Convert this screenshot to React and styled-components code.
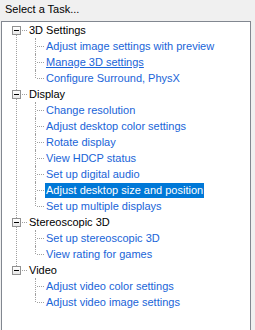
import styled, { createGlobalStyle } from "styled-components";

const GlobalStyle = createGlobalStyle`
  body {
    margin: 0;
    background: #f0f0f0;
    font-family: "Liberation Sans", Arial, sans-serif;
    font-size: 11px;
  }
`;

const Container = styled.div`
  width: 255px;
  height: 330px;
  overflow: hidden;
`;

const Heading = styled.div`
  height: 21px;
  padding-left: 5px;
  line-height: 18px;
  font-size: 11px;
  color: #000;
`;

const Panel = styled.div`
  margin-left: 1px;
  width: 248px;
  height: 320px;
  border: 1px solid #828790;
  background: #fff;
`;

const Tree = styled.ul`
  list-style: none;
  margin: 0;
  padding: 0;
`;

const Category = styled.li`
  position: relative;

  &::before {
    content: "";
    position: absolute;
    left: 14px;
    top: 8px;
    height: 100%;
    border-left: 1px dotted #a0a0a0;
  }

  &:last-child::before {
    display: none;
  }
`;

const Row = styled.div`
  position: relative;
  height: 16px;
  display: flex;
  align-items: center;
`;

const Toggle = styled.span`
  position: relative;
  z-index: 1;
  box-sizing: border-box;
  width: 9px;
  height: 9px;
  margin-left: 10px;
  border: 1px solid #919191;
  background: linear-gradient(#fff, #e8e8e8);
  display: flex;
  align-items: center;
  justify-content: center;

  &::after {
    content: "";
    width: 5px;
    height: 1px;
    background: #000;
  }
`;

const Connector = styled.span`
  width: ${(p) => p.$w}px;
  margin-left: 1px;
  border-top: 1px dotted #a0a0a0;
`;

const Label = styled.span`
  height: 15px;
  line-height: 15px;
  padding: 0 1px;
  margin-left: 1px;
  white-space: nowrap;
  color: ${(p) => (p.$selected ? "#fff" : p.$link ? "#1964d8" : "#000")};
  background: ${(p) => (p.$selected ? "#0078d7" : "transparent")};
  text-decoration: ${(p) => (p.$hover ? "underline" : "none")};
`;

const Children = styled.ul`
  list-style: none;
  margin: 0;
  padding: 0;
`;

const Child = styled.li`
  position: relative;
  height: 16px;
  display: flex;
  align-items: center;
  padding-left: 34px;

  &::before {
    content: "";
    position: absolute;
    left: 33px;
    top: 0;
    height: 16px;
    border-left: 1px dotted #a0a0a0;
  }

  &:last-child::before {
    height: 8px;
  }
`;

const tasks = [
  {
    name: "3D Settings",
    items: [
      "Adjust image settings with preview",
      "Manage 3D settings",
      "Configure Surround, PhysX",
    ],
  },
  {
    name: "Display",
    items: [
      "Change resolution",
      "Adjust desktop color settings",
      "Rotate display",
      "View HDCP status",
      "Set up digital audio",
      "Adjust desktop size and position",
      "Set up multiple displays",
    ],
  },
  {
    name: "Stereoscopic 3D",
    items: ["Set up stereoscopic 3D", "View rating for games"],
  },
  {
    name: "Video",
    items: ["Adjust video color settings", "Adjust video image settings"],
  },
];

const App = () => {
  const selected = "Adjust desktop size and position";
  const hovered = "Manage 3D settings";

  return (
    <Container>
      <GlobalStyle />
      <Heading>Select a Task...</Heading>
      <Panel>
        <Tree>
          {tasks.map((cat) => (
            <Category key={cat.name}>
              <Row>
                <Toggle />
                <Connector $w={5} />
                <Label>{cat.name}</Label>
              </Row>
              <Children>
                {cat.items.map((item) => (
                  <Child key={item}>
                    <Connector $w={7} />
                    <Label
                      $link
                      $selected={item === selected}
                      $hover={item === hovered}
                    >
                      {item}
                    </Label>
                  </Child>
                ))}
              </Children>
            </Category>
          ))}
        </Tree>
      </Panel>
    </Container>
  );
};

export default App;
